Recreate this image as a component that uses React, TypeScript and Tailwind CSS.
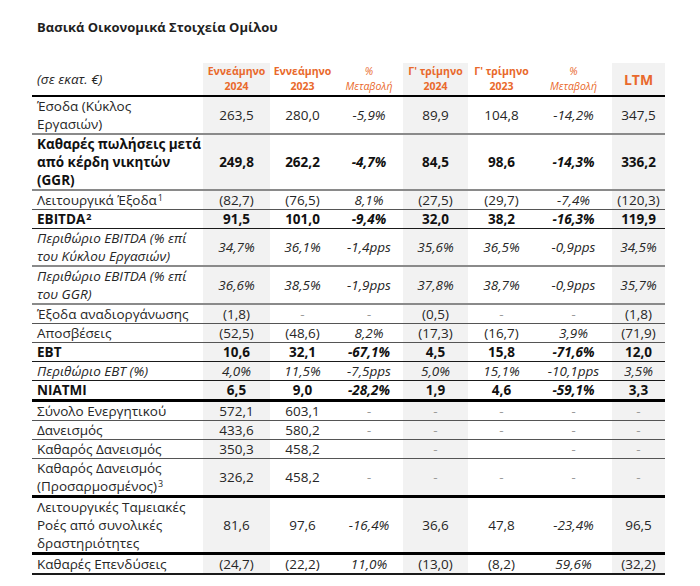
import React from "react";

type RowStyle = "normal" | "bold" | "italic";
type Line = "gray" | "thin" | "dark" | "thick" | "end";

interface Row {
    label: React.ReactNode;
    values: string[];
    style: RowStyle;
    line: Line;
}

const lineClass: Record<Line, string> = {
    gray: "border-b-2 border-[#8a8a8a]",
    thin: "border-b border-[#555]",
    dark: "border-b border-[#1a1a1a]",
    thick: "border-b-[3px] border-black",
    end: "border-b-2 border-[#1a1a1a]",
};

const cols = "grid grid-cols-[171px_67px_65px_68px_65px_67px_77px_53px]";
const shaded = [0, 3, 6];
const pctCols = [2, 5];

const Sup = ({ n }: { n: string }) => <sup className="text-[9px] leading-none ml-px">{n}</sup>;

const rows: Row[] = [
    { label: <>Έσοδα (Κύκλος<br />Εργασιών)</>, values: ["263,5", "280,0", "-5,9%", "89,9", "104,8", "-14,2%", "347,5"], style: "normal", line: "gray" },
    { label: <>Καθαρές πωλήσεις μετά<br />από κέρδη νικητών<br />(GGR)</>, values: ["249,8", "262,2", "-4,7%", "84,5", "98,6", "-14,3%", "336,2"], style: "bold", line: "gray" },
    { label: <>Λειτουργικά Έξοδα<Sup n="1" /></>, values: ["(82,7)", "(76,5)", "8,1%", "(27,5)", "(29,7)", "-7,4%", "(120,3)"], style: "normal", line: "thin" },
    { label: <>EBITDA<Sup n="2" /></>, values: ["91,5", "101,0", "-9,4%", "32,0", "38,2", "-16,3%", "119,9"], style: "bold", line: "dark" },
    { label: <>Περιθώριο EBITDA (% επί<br />του Κύκλου Εργασιών)</>, values: ["34,7%", "36,1%", "-1,4pps", "35,6%", "36,5%", "-0,9pps", "34,5%"], style: "italic", line: "gray" },
    { label: <>Περιθώριο EBITDA (% επί<br />του GGR)</>, values: ["36,6%", "38,5%", "-1,9pps", "37,8%", "38,7%", "-0,9pps", "35,7%"], style: "italic", line: "gray" },
    { label: "Έξοδα αναδιοργάνωσης", values: ["(1,8)", "-", "-", "(0,5)", "-", "-", "(1,8)"], style: "normal", line: "thin" },
    { label: "Αποσβέσεις", values: ["(52,5)", "(48,6)", "8,2%", "(17,3)", "(16,7)", "3,9%", "(71,9)"], style: "normal", line: "thin" },
    { label: "EBT", values: ["10,6", "32,1", "-67,1%", "4,5", "15,8", "-71,6%", "12,0"], style: "bold", line: "dark" },
    { label: "Περιθώριο EBT (%)", values: ["4,0%", "11,5%", "-7,5pps", "5,0%", "15,1%", "-10,1pps", "3,5%"], style: "italic", line: "dark" },
    { label: "NIATMI", values: ["6,5", "9,0", "-28,2%", "1,9", "4,6", "-59,1%", "3,3"], style: "bold", line: "thick" },
    { label: "Σύνολο Ενεργητικού", values: ["572,1", "603,1", "-", "-", "-", "-", "-"], style: "normal", line: "thin" },
    { label: "Δανεισμός", values: ["433,6", "580,2", "-", "-", "-", "-", "-"], style: "normal", line: "thin" },
    { label: "Καθαρός Δανεισμός", values: ["350,3", "458,2", "", "-", "", "-", "-"], style: "normal", line: "thin" },
    { label: <>Καθαρός Δανεισμός<br />(Προσαρμοσμένος)<Sup n="3" /></>, values: ["326,2", "458,2", "-", "-", "-", "-", "-"], style: "normal", line: "thick" },
    { label: <>Λειτουργικές Ταμειακές<br />Ροές από συνολικές<br />δραστηριότητες</>, values: ["81,6", "97,6", "-16,4%", "36,6", "47,8", "-23,4%", "96,5"], style: "normal", line: "thick" },
    { label: "Καθαρές Επενδύσεις", values: ["(24,7)", "(22,2)", "11,0%", "(13,0)", "(8,2)", "59,6%", "(32,2)"], style: "normal", line: "end" },
];

const HeaderCell = ({ top, bottom, idx, pct }: { top: string; bottom: string; idx: number; pct?: boolean }) => (
    <div
        className={`flex flex-col items-center justify-center text-[10.5px] leading-[15px] text-[#e9692c] ${
            shaded.includes(idx) ? "bg-[#f2f2f2]" : ""
        } ${pct ? "italic font-normal" : "font-bold"}`}
    >
        <span>{top}</span>
        <span>{bottom}</span>
    </div>
);

export default function App() {
    return (
        <div className="min-h-[586px] w-[700px] bg-white px-[32px] pt-[18px] font-['Open_Sans',sans-serif] text-[#262626]">
            <h1 className="pl-[5px] text-[13px] font-bold leading-[18px] text-[#1f1f1f]">
                Βασικά Οικονομικά Στοιχεία Ομίλου
            </h1>

            <div className="mt-[27px] w-[633px]">
                {/* header */}
                <div className={`${cols} h-[34px] border-b-2 border-black`}>
                    <div className="flex items-center pl-[5px] text-[13.5px] italic">(σε εκατ. €)</div>
                    <HeaderCell top="Εννεάμηνο" bottom="2024" idx={0} />
                    <HeaderCell top="Εννεάμηνο" bottom="2023" idx={1} />
                    <HeaderCell top="%" bottom="Μεταβολή" idx={2} pct />
                    <HeaderCell top="Γ' τρίμηνο" bottom="2024" idx={3} />
                    <HeaderCell top="Γ' τρίμηνο" bottom="2023" idx={4} />
                    <HeaderCell top="%" bottom="Μεταβολή" idx={5} pct />
                    <div className="flex items-center justify-center bg-[#f2f2f2] text-[14px] font-bold text-[#e9692c]">
                        LTM
                    </div>
                </div>

                {rows.map((row, i) => (
                    <div key={i} className={`${cols} ${lineClass[row.line]} text-[13.5px] leading-[18px]`}>
                        <div
                            className={`whitespace-nowrap pl-[5px] ${row.style === "bold" ? "font-bold text-[#111]" : ""} ${
                                row.style === "italic" ? "italic" : ""
                            }`}
                        >
                            {row.label}
                        </div>
                        {row.values.map((v, j) => (
                            <div
                                key={j}
                                className={`flex items-center justify-center ${shaded.includes(j) ? "bg-[#f2f2f2]" : ""} ${
                                    row.style === "bold" ? "font-bold text-[#111]" : ""
                                } ${row.style === "italic" || pctCols.includes(j) ? "italic" : ""} ${
                                    v === "-" ? "text-[#9a9a9a]" : ""
                                }`}
                            >
                                {v}
                            </div>
                        ))}
                    </div>
                ))}
            </div>
        </div>
    );
}
